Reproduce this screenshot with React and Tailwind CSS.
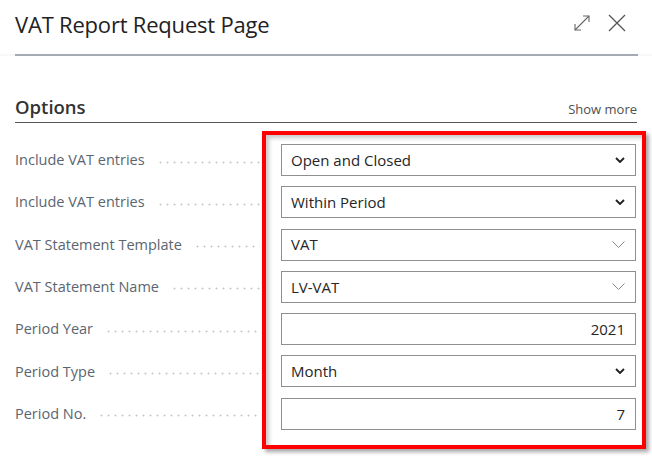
import React from "react";

const rows = [
  { label: "Include VAT entries", value: "Open and Closed", kind: "option" },
  { label: "Include VAT entries", value: "Within Period", kind: "option" },
  { label: "VAT Statement Template", value: "VAT", kind: "lookup" },
  { label: "VAT Statement Name", value: "LV-VAT", kind: "lookup" },
  { label: "Period Year", value: "2021", kind: "number" },
  { label: "Period Type", value: "Month", kind: "option" },
  { label: "Period No.", value: "7", kind: "number" },
];

function ExpandIcon() {
  return (
    <svg width="18" height="18" viewBox="0 0 18 18" fill="none" stroke="#666" strokeWidth="1.1">
      <path d="M2 16 L16 2" />
      <path d="M10 2 H16 V8" />
      <path d="M2 10 V16 H8" />
    </svg>
  );
}

function CloseIcon() {
  return (
    <svg width="18" height="18" viewBox="0 0 18 18" fill="none" stroke="#555" strokeWidth="1.3">
      <path d="M1 1 L17 17 M17 1 L1 17" />
    </svg>
  );
}

function BoldChevron() {
  return (
    <svg width="10" height="6" viewBox="0 0 10 6" fill="none" stroke="#222" strokeWidth="1.9">
      <path d="M1 1 L5 5 L9 1" />
    </svg>
  );
}

function ThinChevron() {
  return (
    <svg width="13" height="7" viewBox="0 0 13 7" fill="none" stroke="#8a8a8a" strokeWidth="1">
      <path d="M0.5 0.5 L6.5 6.5 L12.5 0.5" />
    </svg>
  );
}

function Field({ row }) {
  return (
    <div className="h-[32px] border border-[#8f8f8f] bg-white flex items-center px-[9px] text-[15px] text-[#262626]">
      {row.kind === "number" ? (
        <span className="ml-auto pr-[1px]">{row.value}</span>
      ) : (
        <>
          <span className="flex-1">{row.value}</span>
          <span className="flex items-center pr-[1px]">
            {row.kind === "option" ? <BoldChevron /> : <ThinChevron />}
          </span>
        </>
      )}
    </div>
  );
}

export default function App() {
  return (
    <div className="w-[652px] h-[464px] bg-white overflow-hidden font-['Open_Sans','Noto_Sans',sans-serif]">
      {/* header */}
      <div className="h-[54px] flex items-center justify-between pl-[15px] pr-[26px]">
        <h1 className="text-[22px] text-[#222] -mt-[6px] tracking-[-0.2px]">VAT Report Request Page</h1>
        <div className="flex items-center gap-[17px] -mt-[8px]">
          <ExpandIcon />
          <CloseIcon />
        </div>
      </div>
      <div className="h-[2px] bg-[#f7f7f7] px-[15px]">
        <div className="h-[2px] w-[623px] bg-[#a6aab2]" />
      </div>

      {/* options */}
      <div className="px-[15px] pt-[39px]">
        <div className="flex items-end justify-between border-b border-[#555] pb-[3px] w-[622px]">
          <h2 className="text-[18.5px] font-semibold text-[#333] leading-[24px]">Options</h2>
          <span className="text-[13px] text-[#505050] mb-[0px]">Show more</span>
        </div>

        <div className="flex mt-[8px]">
          <div className="w-[247px] shrink-0 pt-[13px] flex flex-col gap-[10.3px]">
            {rows.map((r, i) => (
              <div key={i} className="h-[32px] flex items-center text-[14.5px] text-[#5b6570]">
                <span className="whitespace-nowrap">{r.label}</span>
                <span className="flex-1 ml-[12px] mr-[2px] h-[3px] mt-[4px] bg-[radial-gradient(circle,#c8c8c8_0.9px,transparent_1.1px)] bg-[length:7px_3px]" />
              </div>
            ))}
          </div>
          <div className="w-[384px] shrink-0 border-4 border-[#ff0000] pl-[15px] pr-[6px] pt-[9px] pb-[15px] shadow-[3px_3px_4px_rgba(0,0,0,0.35),inset_3px_3px_4px_rgba(0,0,0,0.22)] flex flex-col gap-[10.3px]">
            {rows.map((r, i) => (
              <Field key={i} row={r} />
            ))}
          </div>
        </div>
      </div>
    </div>
  );
}
